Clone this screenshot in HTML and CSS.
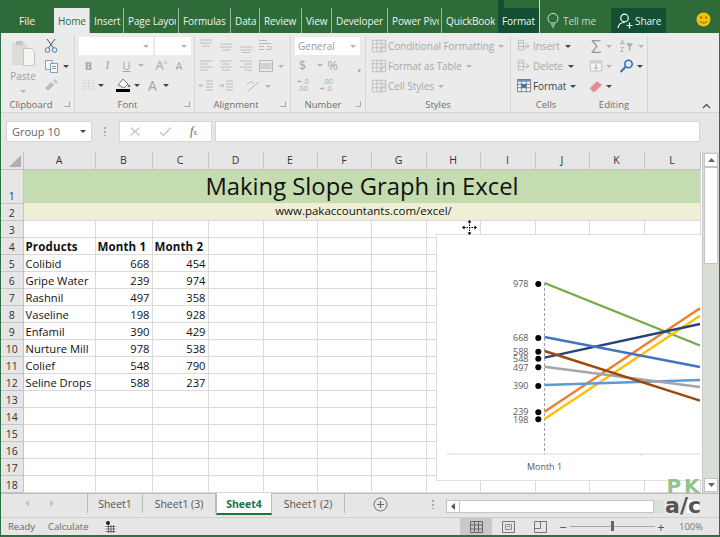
FILE: index.html
```html
<!DOCTYPE html>
<html lang="en">
<head>
<meta charset="utf-8">
<title>Making Slope Graph in Excel</title>
<link rel="stylesheet" href="styles.css">
</head>
<body>
<svg class="defs" width="0" height="0" aria-hidden="true">
  <symbol id="al-t" viewBox="0 0 16 14"><path d="M2 1h12M2 4h12M4 7h8" stroke="#bdbdbd" fill="none"/></symbol>
  <symbol id="al-m" viewBox="0 0 16 14"><path d="M2 5h12M2 8h12M4 11h8" stroke="#bdbdbd" fill="none"/></symbol>
  <symbol id="al-b" viewBox="0 0 16 14"><path d="M2 8h12M2 11h12M4 13.500h8" stroke="#bdbdbd" fill="none"/></symbol>
  <symbol id="al-l" viewBox="0 0 16 14"><path d="M2 2h12M2 5h8M2 8h12M2 11h8" stroke="#bdbdbd" fill="none"/></symbol>
  <symbol id="al-c" viewBox="0 0 16 14"><path d="M2 2h12M4 5h8M2 8h12M4 11h8" stroke="#bdbdbd" fill="none"/></symbol>
  <symbol id="al-r" viewBox="0 0 16 14"><path d="M2 2h12M6 5h8M2 8h12M6 11h8" stroke="#bdbdbd" fill="none"/></symbol>
  <symbol id="sheetico" viewBox="0 0 16 16"><path d="M1.500 1.500h6v3h-6zM1.500 4.500v4h6v-4M1.500 8.500v4h6v-4M7.500 8.500h6M10 5l4 3-4 3" stroke="#b5b5b5" fill="none"/></symbol>
  <symbol id="tbl" viewBox="0 0 18 18"><path d="M1.500 2.500h15v13h-15zM1.500 6.500h15M1.500 11h15M6.500 2.500v13M11.500 2.500v13" stroke="#bcbcbc" fill="none"/><path d="M9 14l7-7 1 1-7 7z" fill="#c4c4c4"/></symbol>
</svg>

<div class="app">
  <header class="titlebar">
    <span class="tab tab-file">File</span>
    <span class="tab tab-home">Home</span>
    <span class="tab">Insert</span>
    <span class="tab">Page Layout</span>
    <span class="tab">Formulas</span>
    <span class="tab">Data</span>
    <span class="tab">Review</span>
    <span class="tab">View</span>
    <span class="tab">Developer</span>
    <span class="tab">Power Pivot</span>
    <span class="tab">QuickBooks</span>
    <span class="tab tab-format">Format</span>
    <span class="tab tab-tell">
      <svg width="12" height="15" viewBox="0 0 12 15"><path d="M3.500 10C2 8.500 1 7.500 1 5.500a5 5 0 0 1 10 0C11 7.500 10 8.500 8.500 10zM4 12h4M5 14h2" stroke="#d8e6dc" fill="none"/></svg>
      Tell me
    </span>
    <span class="tab tab-share">
      <svg width="17" height="16" viewBox="0 0 17 16"><circle cx="7.500" cy="5" r="3.800" stroke="#fff" fill="none" stroke-width="1.200"/><path d="M1 15c.5-4 3-5.500 6.500-5.500M9.500 12.500h6M12.500 9.500v6" stroke="#fff" fill="none" stroke-width="1.200"/></svg>
      Share
    </span>
    <span class="smiley-wrap">
      <svg width="15" height="15" viewBox="0 0 15 15"><circle cx="7.500" cy="7.500" r="7" fill="#f4c20d"/><circle cx="5" cy="5.500" r="1" fill="#7a5a00"/><circle cx="10" cy="5.500" r="1" fill="#7a5a00"/><path d="M4 9c1 2.500 6 2.500 7 0" stroke="#7a5a00" fill="none"/></svg>
    </span>
  </header>

  <section class="ribbon">
    <div class="group g-clip">
      <div class="gbody clip-body">
        <div class="paste">
          <svg width="24" height="28" viewBox="0 0 24 28"><path d="M1 4h15v22H1z" fill="#dcdcd6"/><path d="M5 2h7v4H5z" fill="#c4c4c4"/><path d="M12.500 9.500h8l3 3v14h-11z" fill="#f4f4f4" stroke="#c6c6c6"/></svg>
          <span>Paste</span>
          <i class="caret"></i>
        </div>
        <div class="clip-col">
          <svg width="14" height="15" viewBox="0 0 14 15"><path d="M3 1l6.500 9M11 1L4.500 10" stroke="#555" fill="none"/><circle cx="3.500" cy="12" r="2.300" stroke="#4a7fb8" fill="none"/><circle cx="10.500" cy="12" r="2.300" stroke="#4a7fb8" fill="none"/></svg>
          <div class="with-caret">
            <svg width="15" height="14" viewBox="0 0 15 14"><path d="M1.500 1.500h7v9h-7z" fill="#f6f6f6" stroke="#9a9a9a"/><path d="M6.500 4.500h7v9h-7z" fill="#f6f6f6" stroke="#7d9dbd"/><path d="M8 7.500h4M8 9.500h4" stroke="#999"/></svg>
            <i class="caret dark"></i>
          </div>
          <svg width="14" height="12" viewBox="0 0 14 12"><path d="M1 9l6-6 3 3-6 6z" fill="#bdbdbd"/><path d="M9 2l2-2 3 3-2 2z" fill="#c8c8c8"/></svg>
        </div>
      </div>
      <div class="glabel">Clipboard<b class="launcher"></b></div>
    </div>

    <div class="group g-font">
      <div class="gbody stack">
        <div class="row combo-row">
          <span class="combo c-name"><i class="caret"></i></span>
          <span class="combo c-size"><i class="caret"></i></span>
        </div>
        <div class="row font-fmt">
          <b class="glyph">B</b><em class="glyph ser">I</em><u class="glyph">U</u><i class="caret"></i>
          <span class="glyph big gap-a">A<sup>^</sup></span><span class="glyph">A<sup>ˇ</sup></span>
        </div>
        <div class="row font-col">
          <svg width="13" height="14" viewBox="0 0 16 14"><path d="M1.500 1.500h13v11h-13zM1.500 5h13M1.500 9h13M8 1.500v11" stroke="#c4c4c4" stroke-dasharray="1 1" fill="none"/></svg>
          <i class="caret dark"></i>
          <span class="fill-ico">
            <svg width="15" height="11" viewBox="0 0 15 11"><path d="M2 7l5-6 5 5-4 4z" fill="#f4f4f4" stroke="#777"/><path d="M13 6l1.500 3h-3z" fill="#2a7ac0"/></svg>
            <i class="fillbar"></i>
          </span>
          <i class="caret dark"></i>
          <span class="glyph bigger">A</span>
          <i class="caret dark"></i>
        </div>
      </div>
      <div class="glabel">Font<b class="launcher"></b></div>
    </div>

    <div class="group g-align">
      <div class="gbody stack">
        <div class="row icons">
          <svg class="i16"><use href="#al-t"/></svg><svg class="i16"><use href="#al-m"/></svg><svg class="i16"><use href="#al-b"/></svg>
          <svg class="i16" viewBox="0 0 16 14"><path d="M1 1.500h8M1 4.500h12M1 7.500h5M1 10.500h5M8 10.500h4c2 0 2-3 0-3H9" stroke="#b8b8b8" fill="none"/></svg>
        </div>
        <div class="row icons">
          <svg class="i16"><use href="#al-l"/></svg><svg class="i16"><use href="#al-c"/></svg><svg class="i16"><use href="#al-r"/></svg>
          <svg class="i16" viewBox="0 0 16 14"><path d="M1.500 1.500h13v11h-13zM1.500 5h13M1.500 9h13M3 7h10" stroke="#b8b8b8" fill="none"/></svg>
          <i class="caret"></i>
        </div>
        <div class="row icons">
          <svg class="i16" viewBox="0 0 16 14"><path d="M8 2h7M8 5h7M8 8h7M8 11h7M1 6.500h5M3 4.500l-2 2 2 2" stroke="#bbb" fill="none"/></svg>
          <svg class="i16" viewBox="0 0 16 14"><path d="M8 2h7M8 5h7M8 8h7M8 11h7M1 6.500h5M4 4.500l2 2-2 2" stroke="#bbb" fill="none"/></svg>
          <svg class="i16 orient" viewBox="0 0 16 14"><path d="M3 12L14 3M2 6l4-4 3 3" stroke="#b8b8b8" fill="none"/></svg>
          <i class="caret"></i>
        </div>
      </div>
      <div class="glabel">Alignment<b class="launcher"></b></div>
    </div>

    <div class="group g-num">
      <div class="gbody stack">
        <div class="row combo-row"><span class="combo c-num">General<i class="caret"></i></span></div>
        <div class="row num-fmt"><span class="glyph big">$</span><i class="caret"></i><span class="glyph big">%</span><span class="glyph big bold comma">,</span></div>
        <div class="row num-dec">
          <svg width="16" height="14" viewBox="0 0 16 14"><path d="M1 3.500h4M2.500 2L1 3.500 2.500 5" stroke="#b5b5b5" fill="none"/><text x="6" y="6" class="tiny">.0</text><text x="1" y="13" class="tiny">.00</text></svg>
          <svg width="16" height="14" viewBox="0 0 16 14"><text x="4" y="6" class="tiny">.00</text><path d="M1 10.500h4M3.500 9L5 10.500 3.500 12" stroke="#b5b5b5" fill="none"/><text x="7" y="13" class="tiny">.0</text></svg>
        </div>
      </div>
      <div class="glabel">Number<b class="launcher"></b></div>
    </div>

    <div class="group g-styles">
      <div class="gbody stack">
        <div class="row txt"><svg class="i18"><use href="#tbl"/></svg>Conditional Formatting<i class="caret"></i></div>
        <div class="row txt"><svg class="i18"><use href="#tbl"/></svg>Format as Table<i class="caret"></i></div>
        <div class="row txt"><svg class="i18"><use href="#tbl"/></svg>Cell Styles<i class="caret"></i></div>
      </div>
      <div class="glabel">Styles</div>
    </div>

    <div class="group g-cells">
      <div class="gbody stack">
        <div class="row txt"><svg class="i16"><use href="#sheetico"/></svg>Insert<i class="caret dark far"></i></div>
        <div class="row txt"><svg class="i16"><use href="#sheetico"/></svg>Delete<i class="caret dark far"></i></div>
        <div class="row txt on">
          <svg class="i16" viewBox="0 0 16 16"><path d="M.5 2.500h15v12H.5zM.5 6h15M.5 10h15M5 2.500v12M10.500 2.500v12" stroke="#777" fill="#f6f6f6"/><path d="M5 6h5.500v4H5z" fill="#2a72c4"/><path d="M0 0h16v2H0z" fill="#4a86c8"/></svg>
          Format<i class="caret dark"></i>
        </div>
      </div>
      <div class="glabel">Cells</div>
    </div>

    <div class="group g-edit">
      <div class="gbody stack">
        <div class="row">
          <span class="sigma">Σ</span><i class="caret tight"></i>
          <span class="sort"><svg width="16" height="16" viewBox="0 0 18 16"><text x="1" y="7" class="tiny g">A</text><text x="1" y="15" class="tiny g">Z</text><path d="M8 5h8l-3 4v4h-2V9z" fill="#b0b0b0"/></svg></span><i class="caret tight"></i>
        </div>
        <div class="row">
          <svg width="14" height="14" viewBox="0 0 17 15"><path d="M1.500 1.500h14v12h-14z" fill="#f4f4f4" stroke="#b8b8b8"/><path d="M1.500 1.500h14v3h-14z" fill="#cfcfcf"/><path d="M8.500 5v6M6 9l2.500 2.500L11 9" stroke="#999" fill="none"/></svg>
          <i class="caret tight"></i>
          <span class="sort"><svg width="15" height="14" viewBox="0 0 15 14"><circle cx="9.500" cy="5" r="3.700" stroke="#2a72c4" fill="none" stroke-width="1.600"/><path d="M6.500 8L1.500 13" stroke="#2a72c4" stroke-width="2"/></svg></span><i class="caret dark tight"></i>
        </div>
        <div class="row">
          <svg width="14" height="13" viewBox="0 0 16 14"><path d="M1 9l8-8 6 4-8 8H4z" fill="#e58c96"/></svg>
          <i class="caret dark tight"></i>
        </div>
      </div>
      <div class="glabel">Editing</div>
    </div>

    <div class="collapse"><svg width="9" height="6" viewBox="0 0 9 6"><path d="M1 5l3.500-3.500L8 5" stroke="#555" stroke-width="1.400" fill="none"/></svg></div>
  </section>

  <section class="fbar">
    <div class="namebox">Group 10<i class="caret dark"></i></div>
    <span class="vdots"></span>
    <div class="fxbox">
      <svg width="12" height="11" viewBox="0 0 12 11"><path d="M1.500 1.500l9 8M10.500 1.500l-9 8" stroke="#c4c4c4" stroke-width="1.300"/></svg>
      <svg width="13" height="11" viewBox="0 0 13 11"><path d="M1 6l3.500 3.500L12 1.500" stroke="#c4c4c4" stroke-width="1.300" fill="none"/></svg>
      <span class="fx"><i>f</i><small>x</small></span>
    </div>
    <div class="finput"></div>
  </section>

  <section class="sheet">
    <div class="gridwrap">
      <table class="grid">
        <colgroup>
          <col class="c0"><col class="ca"><col class="cb"><col class="cc"><col class="cd"><col class="ce"><col class="cf"><col class="cg"><col class="ch"><col class="ci"><col class="cj"><col class="ck"><col class="cl">
        </colgroup>
        <thead>
          <tr><th class="corner"><i></i></th><th>A</th><th>B</th><th>C</th><th>D</th><th>E</th><th>F</th><th>G</th><th>H</th><th>I</th><th>J</th><th>K</th><th>L</th></tr>
        </thead>
        <tbody>
          <tr class="r1"><th>1</th><td colspan="12" class="title">Making Slope Graph in Excel</td></tr>
          <tr class="r2"><th>2</th><td colspan="12" class="sub">www.pakaccountants.com/excel/</td></tr>
          <tr><th>3</th><td></td><td></td><td></td><td></td><td></td><td></td><td></td><td></td><td></td><td></td><td></td><td></td></tr>
          <tr class="hd"><th>4</th><td>Products</td><td>Month 1</td><td>Month 2</td><td></td><td></td><td></td><td></td><td></td><td></td><td></td><td></td><td></td></tr>
          <tr><th>5</th><td>Colibid</td><td class="n">668</td><td class="n">454</td><td></td><td></td><td></td><td></td><td></td><td></td><td></td><td></td><td></td></tr>
          <tr><th>6</th><td>Gripe Water</td><td class="n">239</td><td class="n">974</td><td></td><td></td><td></td><td></td><td></td><td></td><td></td><td></td><td></td></tr>
          <tr><th>7</th><td>Rashnil</td><td class="n">497</td><td class="n">358</td><td></td><td></td><td></td><td></td><td></td><td></td><td></td><td></td><td></td></tr>
          <tr><th>8</th><td>Vaseline</td><td class="n">198</td><td class="n">928</td><td></td><td></td><td></td><td></td><td></td><td></td><td></td><td></td><td></td></tr>
          <tr><th>9</th><td>Enfamil</td><td class="n">390</td><td class="n">429</td><td></td><td></td><td></td><td></td><td></td><td></td><td></td><td></td><td></td></tr>
          <tr><th>10</th><td>Nurture Mill</td><td class="n">978</td><td class="n">538</td><td></td><td></td><td></td><td></td><td></td><td></td><td></td><td></td><td></td></tr>
          <tr><th>11</th><td>Colief</td><td class="n">548</td><td class="n">790</td><td></td><td></td><td></td><td></td><td></td><td></td><td></td><td></td><td></td></tr>
          <tr><th>12</th><td>Seline Drops</td><td class="n">588</td><td class="n">237</td><td></td><td></td><td></td><td></td><td></td><td></td><td></td><td></td><td></td></tr>
          <tr><th>13</th><td></td><td></td><td></td><td></td><td></td><td></td><td></td><td></td><td></td><td></td><td></td><td></td></tr>
          <tr><th>14</th><td></td><td></td><td></td><td></td><td></td><td></td><td></td><td></td><td></td><td></td><td></td><td></td></tr>
          <tr><th>15</th><td></td><td></td><td></td><td></td><td></td><td></td><td></td><td></td><td></td><td></td><td></td><td></td></tr>
          <tr><th>16</th><td></td><td></td><td></td><td></td><td></td><td></td><td></td><td></td><td></td><td></td><td></td><td></td></tr>
          <tr><th>17</th><td></td><td></td><td></td><td></td><td></td><td></td><td></td><td></td><td></td><td></td><td></td><td></td></tr>
          <tr><th>18</th><td></td><td></td><td></td><td></td><td></td><td></td><td></td><td></td><td></td><td></td><td></td><td></td></tr>
        </tbody>
      </table>

      <svg class="movecur" width="15" height="15" viewBox="0 0 15 15"><path d="M7.500 2v11M2 7.500h11" stroke="#000" stroke-dasharray="1.500 1" fill="none"/><path d="M7.500 0l2 2.500h-4zM7.500 15l2-2.500h-4zM0 7.500L2.500 5.500v4zM15 7.500L12.500 5.500v4z" fill="#000"/></svg>

      <div class="chart">
        <svg width="266" height="247" viewBox="436 235 266 247">
          <path d="M448 455H700M448 455v2M641 455v2" stroke="#d9d9d9" fill="none"/>
          <path d="M544.500 284V455" stroke="#a0a0a0" stroke-dasharray="3 2" fill="none"/>
          <g fill="none" stroke-width="2.400">
            <path d="M544.500 284L700 346.500" stroke="#70ad47"/>
            <path d="M544.500 412.700L700 309.300" stroke="#ed7d31"/>
            <path d="M544.500 420L700 316.700" stroke="#ffc000"/>
            <path d="M544.500 358.700L700 325" stroke="#264478"/>
            <path d="M544.500 338L700 368" stroke="#4472c4"/>
            <path d="M544.500 386L700 381" stroke="#5b9bd5"/>
            <path d="M544.500 367.700L700 388" stroke="#a5a5a5"/>
            <path d="M544.500 352L700 401.700" stroke="#9e480e"/>
          </g>
          <g fill="#000">
            <circle cx="538.300" cy="285" r="3"/><circle cx="538.300" cy="339" r="3"/><circle cx="538.300" cy="352.700" r="3"/><circle cx="538.300" cy="359.700" r="3"/><circle cx="538.300" cy="368.300" r="3"/><circle cx="538.300" cy="387" r="3"/><circle cx="538.300" cy="413.300" r="3"/><circle cx="538.300" cy="420.300" r="3"/>
          </g>
          <g class="dl" text-anchor="end">
            <text x="528.500" y="288">978</text><text x="528.500" y="342">668</text><text x="528.500" y="356">588</text><text x="528.500" y="363">548</text><text x="528.500" y="371.500">497</text><text x="528.500" y="390">390</text><text x="528.500" y="416">239</text><text x="528.500" y="424">198</text>
          </g>
          <text class="dl" x="544.500" y="471" text-anchor="middle">Month 1</text>
        </svg>
      </div>
    </div>

    <div class="vscroll">
      <span class="sbtn"><svg width="7" height="4" viewBox="0 0 7 4"><path d="M3.500 0L7 4H0z" fill="#666"/></svg></span>
      <span class="thumb"></span>
      <span class="sbtn bottom"><svg width="7" height="4" viewBox="0 0 7 4"><path d="M3.500 4L7 0H0z" fill="#666"/></svg></span>
    </div>
  </section>

  <section class="tabsbar">
    <div class="tabnav">
      <svg width="5" height="7" viewBox="0 0 5 7"><path d="M4 0v7L0 3.500z" fill="#c4c4c4"/></svg>
      <svg width="5" height="7" viewBox="0 0 5 7"><path d="M1 0v7l4-3.500z" fill="#c4c4c4"/></svg>
    </div>
    <div class="stab s1">Sheet1</div>
    <div class="stab s2">Sheet1 (3)</div>
    <div class="stab active">Sheet4</div>
    <div class="stab s4">Sheet1 (2)</div>
    <div class="addwrap"><svg width="15" height="15" viewBox="0 0 15 15"><circle cx="7.500" cy="7.500" r="6.500" stroke="#777" fill="none"/><path d="M7.500 4v7M4 7.500h7" stroke="#666" stroke-width="1.200"/></svg></div>
    <span class="vdots tabdots"></span>
    <div class="hscroll">
      <span class="hbtn"><svg width="4" height="7" viewBox="0 0 4 7"><path d="M4 0v7L0 3.500z" fill="#555"/></svg></span>
    </div>
    <div class="hrest"></div>
  </section>

  <footer class="status">
    <span class="st-ready">Ready</span>
    <span class="st-calc">Calculate</span>
    <svg class="st-ico" width="11" height="12" viewBox="0 0 11 12"><path d="M0 3h11v9H0z" fill="#f2f2f2"/><path d="M.5 5.500h10M.5 8h10M.5 10.500h10M3.500 4v8M6 4v8M8.500 4v8" stroke="#666"/><circle cx="3" cy="2" r="2" fill="#222"/></svg>
    <div class="views">
      <span class="vbtn sel"><svg width="13" height="12" viewBox="0 0 13 12"><path d="M.5.500h12v11H.5zM.5 4h12M.5 8h12M4.500.500v11M8.500.500v11" stroke="#666" fill="none"/></svg></span>
      <span class="vbtn"><svg width="13" height="12" viewBox="0 0 13 12"><path d="M.5.500h12v11H.5z" stroke="#777" fill="none"/><path d="M3.500 3.500h6v5h-6zM5 5.500h3" stroke="#888" fill="none"/></svg></span>
      <span class="vbtn"><svg width="13" height="12" viewBox="0 0 13 12"><path d="M.5.500h12v11H.5zM.5 7.500h6v-7" stroke="#777" fill="none"/></svg></span>
    </div>
    <div class="zoom">
      <span class="zm zm-minus">−</span>
      <span class="ztrack"><i></i></span>
      <span class="zm zm-plus">+</span>
      <span class="zpct">100%</span>
    </div>
  </footer>

  <div class="wm"><span class="wm-pk">PK</span><span class="wm-ac">a/c</span></div>
</div>
</body>
</html>
```

FILE: styles.css
```css
* { box-sizing: border-box; }
html, body { margin: 0; padding: 0; height: 100%; }
body { background: #e6e6e6; overflow: hidden; font-family: "Open Sans", "Noto Sans", sans-serif; }
.defs { position: absolute; }
.app {
  position: relative; width: 720px; height: 537px; display: flex; flex-direction: column;
  border-left: 1px solid #2f6f47; border-right: 1px solid #2f6f47; border-bottom: 2px solid #2f6f47;
  background: #e6e6e6; overflow: hidden;
}

/* title / ribbon tabs */
.titlebar {
  height: 33px; margin: 0 -1px; background: #2e6b38; display: grid; padding-top: 8px; flex: none;
  grid-template-columns: 54px 36px 34px 55px 52px 29px 42px 30px 56px 54px 56px 41px 72px 55px 1fr;
  font-size: 10px; color: #fff;
}
.tab {
  display: flex; align-items: center; height: 25px; white-space: nowrap;
  overflow: hidden; padding: 0 0 0 4px; border-right: 3px solid #2e6b38; box-shadow: -1px 0 0 #9db8a3; letter-spacing: -.1px;
  color: #eef4ef;
}
.tab-file { border: 0; box-shadow: none; justify-content: center; padding: 0; font-size: 10.500px; }
.tab-home { background: #ebebeb; color: #2e6b38; border: 0; box-shadow: none; }
.tab-format {
  margin-top: -8px; height: 33px; padding-top: 8px; border-right: 0; box-shadow: 1px 0 0 #cfdcd3;
  background: linear-gradient(90deg, #124f33 6px, transparent 6px) 0 0 / 100% 8px no-repeat, linear-gradient(#124f33, #124f33) 0 8px no-repeat;
}
.tab-tell { border: 0; box-shadow: none; gap: 4px; color: #c7d9cc; padding-left: 8px; }
.tab-share { border: 0; box-shadow: none; gap: 1px; background: #124f33; padding-left: 6px; }
.smiley-wrap { display: flex; justify-content: center; align-items: center; padding-left: 13px; height: 25px; margin-top: -1px; width: 62px; }

/* ribbon */
.ribbon {
  height: 80px; flex: none; display: flex; background: #ebebeb; position: relative; padding: 0 0 0 1px;
  border-bottom: 1px solid #cfd9d0; font-size: 10px; color: #a8a8a8;
}
.group { display: flex; flex-direction: column; border-right: 1px solid #d6d6d6; margin: 3px 0 0; position: relative; }
.gbody { flex: 1; min-height: 0; }
.stack { display: flex; flex-direction: column; justify-content: flex-start; }
.row { display: flex; align-items: center; height: 20px; flex: none; }
.glabel { height: 16px; padding: 2px 14px 0 0; text-align: center; color: #6e6e6e; font-size: 9.500px; line-height: 13px; position: relative; flex: none; }
.launcher { position: absolute; right: 4px; top: 5px; width: 6px; height: 6px; border: 1px solid #aaa; border-top-color: transparent; border-left-color: transparent; }
.g-clip { width: 73px; }
.g-font { width: 120px; padding-left: 4px; }
.g-font .glabel { padding-right: 18px; }
.g-align { width: 96px; padding-left: 1px; }
.g-num { width: 75px; padding-left: 4px; }
.g-styles { width: 145px; padding-left: 5px; }
.g-cells { width: 70px; padding-left: 5px; border-right: 0; }
.g-edit { width: 67px; padding-left: 8px; }
.g-styles .glabel, .g-cells .glabel, .g-edit .glabel { padding-right: 0; }
.g-edit .glabel { margin-left: -8px; }
.g-styles .glabel { margin-left: -5px; }
.g-cells .glabel { margin-left: -5px; }
.collapse { margin-left: auto; align-self: flex-end; margin-bottom: 3px; padding-right: 8px; line-height: 6px; }
.caret { display: inline-block; width: 0; height: 0; border: 3px solid transparent; border-top: 3px solid #b5b5b5; border-bottom: 0; margin-left: 5px; flex: none; }
.caret.dark { border-top-color: #444; }
.glyph { width: 19px; text-align: center; font-size: 11px; font-style: normal; color: #a5a5a5; flex: none; }
.glyph sup { font-size: 7px; line-height: 0; vertical-align: 4px; }
.ser { font-family: "Liberation Serif", serif; font-style: italic; font-size: 12px; }
.big { font-size: 13px; }
.bigger { font-size: 14px; width: 15px; margin-left: 5px; }
.bold { font-weight: 700; }
.gap-a { margin-left: 8px; }

.clip-body { display: flex; }
.paste { width: 42px; display: flex; flex-direction: column; align-items: center; padding-top: 3px; color: #9e9e9e; }
.paste span { line-height: 13px; margin-top: 3px; }
.paste .caret { margin: 7px 0 0; }
.clip-col { display: flex; flex-direction: column; gap: 6px; padding: 2px 0 0 0; align-items: flex-start; }
.with-caret { display: flex; align-items: center; }
.clip-col .caret { margin-left: 4px; }

.combo-row { height: 18px; margin: 1px 0 0; gap: 2px; }
.combo { background: #fff; height: 18px; display: flex; align-items: center; justify-content: flex-end; padding-right: 4px; }
.c-name { width: 74px; }
.c-size { width: 36px; }
.c-num { width: 65px; justify-content: space-between; padding-left: 3px; color: #999; }
.font-fmt .caret { margin-left: 2px; }
.font-col { padding-left: 3px; }
.font-col .caret { margin: 0 0 0 3px; }
.fill-ico { display: flex; flex-direction: column; width: 15px; margin-left: 12px; }
.fillbar { display: block; width: 14px; height: 3px; background: #000; }

.icons { gap: 4px; padding-left: 2px; }
.i16 { width: 16px; height: 14px; flex: none; }
.i18 { width: 16px; height: 16px; flex: none; }
.orient { margin-left: 7px; }
.icons .caret { margin-left: 0; }

.num-fmt { margin-left: -2px; }
.num-fmt .caret { margin: 0 0 0 5px; }
.comma { margin-left: 8px; }
.num-dec { gap: 6px; padding-left: 2px; }
.tiny { font-size: 7px; fill: #a8a8a8; font-family: "Open Sans", sans-serif; }
.tiny.g { fill: #a0a0a0; font-size: 8px; }

.txt { gap: 1px; color: #a8a8a8; white-space: nowrap; letter-spacing: -.05px; }
.txt .caret { margin-left: 3px; }
.txt .far { margin-left: 4px; }
.on { color: #444; }
.sigma { font-size: 18px; color: #999; line-height: 18px; width: 14px; text-align: center; flex: none; }
.tight { margin-left: 3px; }
.sort { margin-left: 7px; display: flex; }

/* formula bar */
.fbar { height: 40px; flex: none; display: flex; align-items: center; padding: 0 0 3px 5px; background: #e6e6e6; font-size: 11px; color: #666; }
.namebox { width: 86px; height: 21px; background: #fff; display: flex; align-items: center; justify-content: space-between; padding: 0 5px 0 5px; border: 1px solid #d6d6d6; }
.vdots { width: 2px; height: 9px; margin: 0 13px 0 12px; background: repeating-linear-gradient(#aaa 0 2px, transparent 2px 4px); flex: none; }
.fxbox { width: 93px; height: 21px; background: #fff; border: 1px solid #d6d6d6; display: flex; align-items: center; gap: 18px; padding-left: 9px; margin-right: 3px; }
.fx { font-family: "Liberation Serif", serif; color: #666; font-size: 12px; }
.fx small { font-size: 8px; }
.finput { width: 485px; height: 21px; background: #fff; border: 1px solid #d6d6d6; }

/* sheet */
.sheet { height: 341px; flex: none; display: flex; background: #fff; margin-top: -1px; }
.gridwrap { position: relative; width: 701px; overflow: hidden; background: #fff; flex: none; }
.grid { border-collapse: collapse; table-layout: fixed; width: 699px; font-family: "Open Sans", sans-serif; font-size: 11.200px; color: #111; }
.c0 { width: 22px; } .ca { width: 72px; } .cb { width: 57px; } .cc { width: 56px; } .cd { width: 55px; } .ce { width: 54px; } .cf { width: 54px; } .cg { width: 55px; } .ch { width: 54px; } .ci { width: 55px; } .cj { width: 54px; } .ck { width: 55px; } .cl { width: 56px; }
.grid th { background: #e6e6e6; font-weight: 400; color: #333; border: 1px solid #c4c4c4; border-width: 0 1px 1px 0; padding: 0; font-size: 10.500px; line-height: 14px; }
.grid tbody th { padding-top: 2px; }
.grid thead th { height: 17px; }
.grid tbody tr { height: 17px; }
.grid td { border: 1px solid #dadada; padding: 2px 2px 0 2px; height: 17px; white-space: nowrap; overflow: hidden; line-height: 14px; }
.grid .r1 { height: 34px; }
.r1 th { vertical-align: bottom; }
.grid .r1 td { height: 34px; }
.grid .title { background: #c5dcb0; text-align: center; font-size: 23.800px; padding: 0 0 1px 1px; line-height: 32px; color: #111; border-bottom: 0; }
.sub { background: #efefd6; text-align: center; }
.grid .sub { font-size: 11.500px; border-top: 0; padding: 0 0 1px 4px; }
.hd td { font-weight: 700; font-size: 11.500px; letter-spacing: .15px; }
.n { text-align: right; }
.corner { position: relative; }
.corner i { position: absolute; right: 2px; bottom: 2px; width: 0; height: 0; border-style: solid; border-width: 0 0 12px 12px; border-color: transparent transparent #b0b0b0 transparent; }

.chart { position: absolute; left: 435px; top: 82px; width: 266px; height: 247px; background: #fff; border: 1px solid #dedede; border-right: 0; overflow: hidden; }
.chart svg { display: block; margin: -1px 0 0 -1px; }
.dl { font-size: 9px; fill: #595959; font-family: "Open Sans", sans-serif; }
.movecur { position: absolute; left: 461px; top: 68px; z-index: 2; }

.vscroll { flex: 1; background: #d8ddd6; display: flex; flex-direction: column; padding: 1px 1px 0; border-left: 1px solid #c8c8c8; }
.sbtn { height: 14px; background: #fff; border: 1px solid #c4c4c4; display: flex; align-items: center; justify-content: center; flex: none; }
.thumb { height: 97px; background: #fff; border: 1px solid #c4c4c4; flex: none; }
.bottom { margin-top: auto; margin-bottom: 1px; }

/* sheet tabs */
.tabsbar { height: 24px; flex: none; display: flex; align-items: stretch; background: #e6e6e6; border-top: 1px solid #bdbdbd; font-size: 10.500px; color: #555; }
.tabnav { width: 87px; display: flex; align-items: center; gap: 19px; padding-left: 24px; border-right: 1px solid #bbb; margin-bottom: 4px; }
.stab { display: flex; align-items: center; justify-content: center; border-right: 1px solid #bbb; margin-bottom: 4px; padding-top: 1px; }
.s1 { width: 55px; } .s2 { width: 73px; } .s4 { width: 73px; }
.stab.active { width: 56px; background: #fff; color: #217346; font-weight: 700; margin-bottom: 2px; border-bottom: 2px solid #217346; margin-top: -1px; border-right: 1px solid #bbb; border-left: 1px solid #bbb; padding: 2px 0 0; }
.addwrap { width: 70px; display: flex; align-items: center; justify-content: center; padding-bottom: 2px; }
.tabdots { align-self: center; margin: 0 12px 2px 17px; }
.hscroll { width: 208px; height: 13px; margin-top: 6px; background: #fff; border: 1px solid #c4c4c4; flex: none; }
.hbtn { display: flex; width: 13px; height: 100%; align-items: center; justify-content: center; border-right: 1px solid #c4c4c4; }
.hrest { width: 45px; height: 13px; margin-top: 6px; flex: none; background: linear-gradient(90deg, #d8e2d8 10px, #e6e6e6 10px, #e6e6e6 33px, #fff 33px); }

/* status */
.status { flex: 1; display: flex; align-items: center; font-size: 9.500px; color: #666; border-top: 1px solid #cfcfcf; background: #e6e6e6; padding-right: 16px; }
.st-ready { margin-left: 7px; }
.st-calc { margin-left: 13px; }
.st-ico { margin-left: 16px; }
.views { display: flex; align-self: stretch; margin-left: auto; }
.vbtn { width: 32px; display: flex; align-items: center; justify-content: center; }
.vbtn.sel { background: #c9c9c9; }
.zoom { display: flex; align-items: center; }
.zm { font-size: 13px; color: #555; width: 10px; text-align: center; line-height: 12px; flex: none; }
.zm-minus { margin: 0 2px; }
.zm-plus { margin-left: 1px; }
.ztrack { display: block; position: relative; width: 85px; height: 1px; background: #a8a8a8; flex: none; }
.ztrack i { position: absolute; left: 41px; top: -5px; width: 3px; height: 10px; background: #666; }
.zpct { margin-left: 13px; color: #777; width: 24px; white-space: nowrap; }

/* watermark */
.wm { position: absolute; left: 664px; top: 475px; width: 36px; display: flex; flex-direction: column; align-items: center; font-family: "DejaVu Sans", sans-serif; font-weight: 700; }
.wm-pk { color: #92c28d; font-size: 20px; letter-spacing: 3px; line-height: 22px; margin-right: -3px; }
.wm-ac { color: #555; font-size: 22px; line-height: 22px; margin-top: -2px; white-space: nowrap; }
```
